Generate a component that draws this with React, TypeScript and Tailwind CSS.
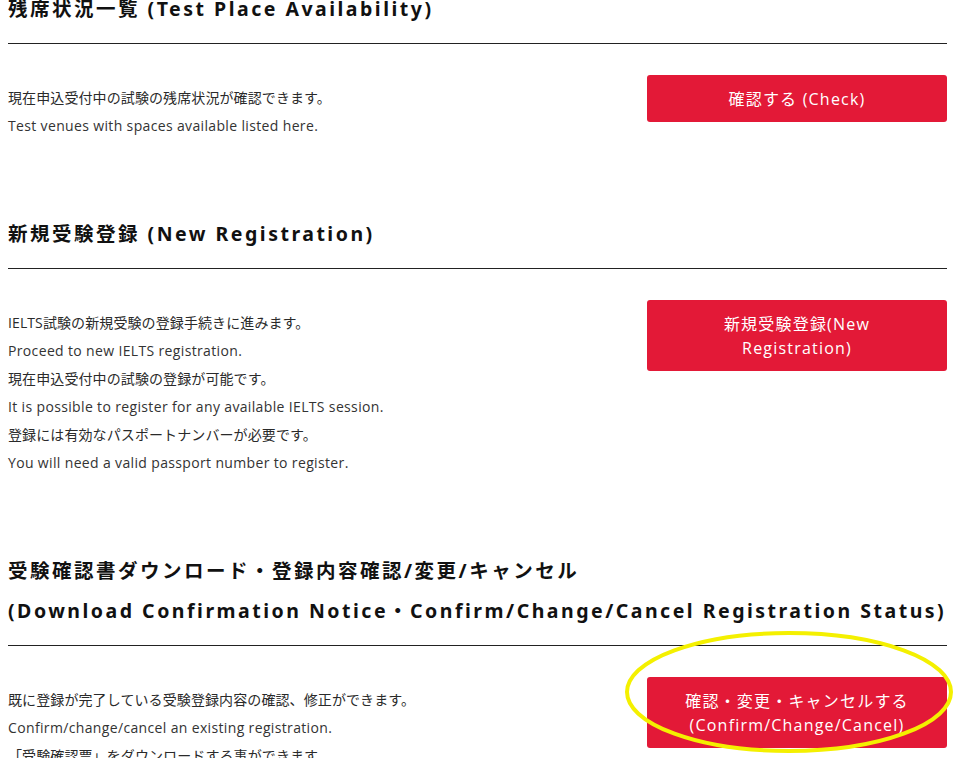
import React from 'react';

const HEAD = "font-['Noto_Sans','Noto_Sans_CJK_JP',sans-serif]";
const BODY = "font-['Open_Sans','Noto_Sans_CJK_JP',sans-serif]";

type Section = {
  title: React.ReactNode;
  lines: string[];
  button: React.ReactNode;
  first?: boolean;
  circled?: boolean;
};

const SECTIONS: Section[] = [
  {
    title: '残席状況一覧 (Test Place Availability)',
    lines: ['現在申込受付中の試験の残席状況が確認できます。', 'Test venues with spaces available listed here.'],
    button: '確認する (Check)',
    first: true,
  },
  {
    title: '新規受験登録 (New Registration)',
    lines: [
      'IELTS試験の新規受験の登録手続きに進みます。',
      'Proceed to new IELTS registration.',
      '現在申込受付中の試験の登録が可能です。',
      'It is possible to register for any available IELTS session.',
      '登録には有効なパスポートナンバーが必要です。',
      'You will need a valid passport number to register.',
    ],
    button: <>新規受験登録(New<br />Registration)</>,
  },
  {
    title: <>受験確認書ダウンロード・登録内容確認/変更/キャンセル<br />(Download Confirmation Notice・Confirm/Change/Cancel Registration Status)</>,
    lines: [
      '既に登録が完了している受験登録内容の確認、修正ができます。',
      'Confirm/change/cancel an existing registration.',
      '「受験確認票」をダウンロードする事ができます。',
      'You can download your Confirmation Notice.',
    ],
    button: <>確認・変更・キャンセルする<br />(Confirm/Change/Cancel)</>,
    circled: true,
  },
];

// english lines get extra tracking so Open Sans reaches the original's width
const isLatin = (l: string) => /^[\x00-\x7f]+$/.test(l);

function Block({ s }: { s: Section }) {
  return (
    <section className={s.first ? 'mt-[-11px]' : 'mt-[74px]'}>
      <h2 className={`${HEAD} whitespace-nowrap text-[19.5px] font-bold leading-[40px] tracking-[2.5px] text-[#111]`}>{s.title}</h2>
      <div className="mt-[14px] h-px bg-[#222]" />
      <div className="flex items-start justify-between pt-[31px]">
        <div className={`${BODY} pt-[9px] text-[14px] leading-[28px] text-[#2a2a2a]`}>
          {s.lines.map((l, i) => (
            <p key={i} className={isLatin(l) ? 'tracking-[0.35px] text-[#333]' : 'tracking-[0.1px]'}>{l}</p>
          ))}
        </div>
        <div className="relative shrink-0">
          <button className={`${BODY} w-[300px] rounded-[3px] bg-[#e31937] py-[11.5px] text-center text-[16px] leading-6 tracking-[1.2px] text-white`}>
            {s.button}
          </button>
          {s.circled && (
            <svg className="pointer-events-none absolute left-[-24px] top-[-48px]" width="336" height="130" viewBox="0 0 336 130">
              <ellipse cx="166" cy="63" rx="162" ry="59" fill="none" stroke="#f4f000" strokeWidth="4" />
            </svg>
          )}
        </div>
      </div>
    </section>
  );
}

export default function App() {
  return (
    <div className="h-[758px] overflow-hidden bg-white pl-2 pr-[9px]">
      {SECTIONS.map((s, i) => <Block key={i} s={s} />)}
    </div>
  );
}
